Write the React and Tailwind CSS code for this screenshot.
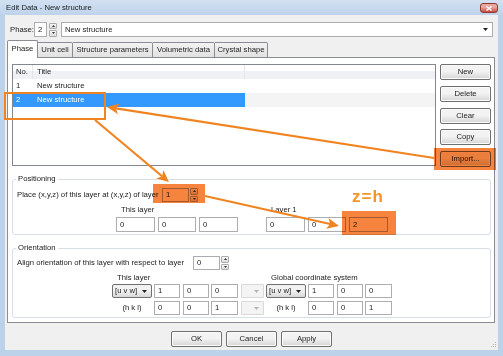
import React from 'react';

const ORANGE = '#f08420';

function Caret({ color = '#222' }) {
  return (
    <svg width="5" height="3" viewBox="0 0 5 3" className="shrink-0">
      <path d="M0 0h5L2.5 3z" fill={color} />
    </svg>
  );
}

function Input({ className = '', children }) {
  return (
    <div className={`border border-[#abadb3] bg-white pl-[3px] flex items-center leading-[10px] shrink-0 ${className}`}>
      {children}
    </div>
  );
}

function Spinner({ className = '' }) {
  return (
    <div className={`w-[8px] flex flex-col gap-[1px] shrink-0 ${className}`}>
      <div className="flex-1 border border-[#acacac] rounded-[1px] bg-linear-to-b from-[#f8f8f8] to-[#dcdcdc] flex items-center justify-center">
        <svg width="3" height="2" viewBox="0 0 3 2"><path d="M0 2h3L1.5 0z" fill="#333" /></svg>
      </div>
      <div className="flex-1 border border-[#acacac] rounded-[1px] bg-linear-to-b from-[#f8f8f8] to-[#dcdcdc] flex items-center justify-center">
        <svg width="3" height="2" viewBox="0 0 3 2"><path d="M0 0h3L1.5 2z" fill="#333" /></svg>
      </div>
    </div>
  );
}

function Combo({ className = '', disabled = false, children }) {
  if (disabled) {
    return (
      <div className={`h-[14px] border border-[#d9d9d9] bg-[#f4f4f4] rounded-[1px] flex items-center justify-end pr-[4px] shrink-0 ${className}`}>
        <Caret color="#b5b5b5" />
      </div>
    );
  }
  return (
    <div className={`h-[14px] border border-[#707070] rounded-[2px] bg-linear-to-b from-[#f2f2f2] from-45% to-[#d9d9d9] flex items-center pl-[2px] pr-[4px] shrink-0 ${className}`}>
      <span className="leading-[10px] whitespace-nowrap">{children}</span>
      <span className="ml-auto"><Caret /></span>
    </div>
  );
}

function Btn({ className = '', children }) {
  return (
    <button className={`h-[16px] flex items-center justify-center border border-[#707070] rounded-[2px] bg-linear-to-b from-[#f3f3f3] from-45% to-[#d5d5d5] shadow-[inset_0_0_0_1px_#fbfbfb] leading-[10px] ${className}`}>
      {children}
    </button>
  );
}

function Arrow({ x1, y1, x2, y2 }) {
  const dx = x2 - x1;
  const dy = y2 - y1;
  const len = Math.hypot(dx, dy);
  const ux = dx / len;
  const uy = dy / len;
  const hl = 12;
  const hw = 5.5;
  const bx = x2 - ux * hl;
  const by = y2 - uy * hl;
  const nx = x2 - ux * (hl - 3);
  const ny = y2 - uy * (hl - 3);
  const px = -uy;
  const py = ux;
  const pts = `${x2},${y2} ${bx + px * hw},${by + py * hw} ${nx},${ny} ${bx - px * hw},${by - py * hw}`;
  return (
    <g>
      <line x1={x1} y1={y1} x2={nx} y2={ny} stroke={ORANGE} strokeWidth="2.2" />
      <polygon points={pts} fill={ORANGE} />
    </g>
  );
}

const tabs = [
  { label: 'Phase', w: 'w-[31px]', active: true },
  { label: 'Unit cell', w: 'w-[35px]' },
  { label: 'Structure parameters', w: 'w-[80px]' },
  { label: 'Volumetric data', w: 'w-[62px]' },
  { label: 'Crystal shape', w: 'w-[53px]' },
];

export default function App() {
  return (
    <div className="relative w-[503px] h-[356px] overflow-hidden bg-[#bcd1ea] font-['Liberation_Sans',Arial,sans-serif] text-[7.7px] whitespace-nowrap text-[#1c1c1c]">
      {/* title bar */}
      <div className="h-[15px] flex items-center pl-[6px] pr-[5px] bg-linear-to-b from-[#d2e1f2] to-[#bed3eb]">
        <span className="leading-[10px]">Edit Data - New structure</span>
        <div className="ml-auto mt-[1px] w-[18px] h-[10px] rounded-[3px] border border-[#8e3a33] bg-linear-to-b from-[#e9a79f] from-40% to-[#c5493d] flex items-center justify-center">
          <svg width="6" height="5" viewBox="0 0 6 5">
            <path d="M0.5 0.5L5.5 4.5M5.5 0.5L0.5 4.5" stroke="#fff" strokeWidth="1.4" />
          </svg>
        </div>
      </div>

      {/* dialog body */}
      <div className="relative mx-[5px] w-[493px] h-[335px] bg-[#f0f0f0] flex flex-col">
        {/* phase row */}
        <div className="mt-[7px] h-[15px] flex items-center pl-[5px]">
          <span className="w-[24px] leading-[10px]">Phase:</span>
          <Input className="w-[13px] h-[15px]">2</Input>
          <Spinner className="ml-[2px] h-[14px]" />
          <div className="ml-[4px] w-[432px] h-[15px] border border-[#abadb3] bg-white flex items-center pl-[3px] pr-[4px]">
            <span className="leading-[10px]">New structure</span>
            <span className="ml-auto"><Caret /></span>
          </div>
        </div>

        {/* tabs */}
        <div className="relative z-10 mt-[3px] -mb-px h-[18px] flex items-end pl-[2px]">
          {tabs.map((t) =>
            t.active ? (
              <div key={t.label} className={`${t.w} h-[18px] bg-white border border-b-0 border-[#898c95] rounded-t-[2px] flex items-center justify-center leading-[10px] pb-[1px]`}>
                {t.label}
              </div>
            ) : (
              <div key={t.label} className={`${t.w} h-[16px] bg-linear-to-b from-[#f3f3f3] to-[#e1e1e1] border border-l-0 border-[#898c95] rounded-tr-[2px] flex items-center justify-center leading-[10px]`}>
                {t.label}
              </div>
            )
          )}
        </div>

        {/* tab panel */}
        <div className="ml-[2px] w-[488px] h-[266px] bg-white border border-[#898c95] flex flex-col pl-[4px] pt-[6px]">
          <div className="flex">
            {/* list */}
            <div className="w-[424px] h-[102px] border border-[#828790] bg-white flex flex-col">
              <div className="h-[14px] flex bg-linear-to-b from-white from-45% to-[#eff1f4] to-45%">
                <div className="w-[20px] pl-[3px] flex items-center border-r border-[#e3e5e8]">No.</div>
                <div className="w-[212px] pl-[4px] flex items-center border-r border-[#e3e5e8]">Title</div>
                <div className="flex-1" />
              </div>
              <div className="h-[14px] flex items-center">
                <div className="w-[20px] pl-[3px]">1</div>
                <div className="pl-[4px]">New structure</div>
              </div>
              <div className="h-[14px] flex">
                <div className="w-[232px] bg-[#3399ff] text-white flex items-center">
                  <div className="w-[20px] pl-[3px]">2</div>
                  <div className="pl-[4px]">New structure</div>
                </div>
                <div className="flex-1 bg-[#f4f4f4]" />
              </div>
            </div>
            {/* side buttons */}
            <div className="ml-[4px] w-[51px] h-[103px] flex flex-col justify-between">
              <Btn>New</Btn>
              <Btn>Delete</Btn>
              <Btn>Clear</Btn>
              <Btn>Copy</Btn>
              <Btn>Import...</Btn>
            </div>
          </div>

          {/* Positioning */}
          <fieldset className="mt-[7px] w-[479px] border border-[#d5dfe5] rounded-[3px] pb-[2px]">
            <legend className="ml-[3px] px-[2px] leading-[10px]">Positioning</legend>
            <div className="mt-[4px] h-[14px] flex items-center pl-[4px]">
              <span className="w-[145px] leading-[10px]">Place (x,y,z) of this layer at (x,y,z) of layer</span>
              <Input className="w-[27px] h-[14px]">1</Input>
              <Spinner className="ml-[1px] h-[14px]" />
            </div>
            <div className="mt-[3px] h-[10px] flex items-center pl-[108px]">
              <span className="w-[150px] leading-[10px]">This layer</span>
              <span className="leading-[10px]">Layer 1</span>
            </div>
            <div className="mt-[2px] h-[15px] flex pl-[103px]">
              <Input className="w-[39px] h-[15px]">0</Input>
              <Input className="ml-[3px] w-[38px] h-[15px]">0</Input>
              <Input className="ml-[3px] w-[39px] h-[15px]">0</Input>
              <Input className="ml-[28px] w-[39px] h-[15px]">0</Input>
              <Input className="ml-[3px] w-[38px] h-[15px]">0</Input>
              <Input className="ml-[3px] w-[39px] h-[15px]">2</Input>
            </div>
          </fieldset>

          {/* Orientation */}
          <fieldset className="mt-[8px] w-[479px] border border-[#d5dfe5] rounded-[3px] pb-[2px]">
            <legend className="ml-[3px] px-[2px] leading-[10px]">Orientation</legend>
            <div className="mt-[3px] h-[14px] flex items-center pl-[4px]">
              <span className="w-[176px] leading-[10px]">Align orientation of this layer with respect to layer</span>
              <Input className="w-[27px] h-[14px]">0</Input>
              <Spinner className="ml-[1px] h-[14px]" />
            </div>
            <div className="mt-[3px] h-[10px] flex items-center pl-[104px]">
              <span className="w-[154px] leading-[10px]">This layer</span>
              <span className="leading-[10px]">Global coordinate system</span>
            </div>
            <div className="mt-[1px] h-[14px] flex items-center pl-[99px]">
              <Combo className="w-[40px]">[u v w]</Combo>
              <Input className="ml-[2px] w-[26px] h-[14px]">1</Input>
              <Input className="ml-[3px] w-[26px] h-[14px]">0</Input>
              <Input className="ml-[2px] w-[27px] h-[14px]">0</Input>
              <Combo disabled className="ml-[3px] w-[23px]" />
              <Combo className="ml-[2px] w-[40px]">[u v w]</Combo>
              <Input className="ml-[2px] w-[26px] h-[14px]">1</Input>
              <Input className="ml-[3px] w-[26px] h-[14px]">0</Input>
              <Input className="ml-[2px] w-[27px] h-[14px]">0</Input>
            </div>
            <div className="mt-[3px] h-[14px] flex items-center pl-[99px]">
              <span className="w-[40px] text-center leading-[10px]">(h k l)</span>
              <Input className="ml-[2px] w-[26px] h-[14px]">0</Input>
              <Input className="ml-[3px] w-[26px] h-[14px]">0</Input>
              <Input className="ml-[2px] w-[27px] h-[14px]">1</Input>
              <Combo disabled className="ml-[3px] w-[23px]" />
              <span className="ml-[2px] w-[40px] text-center leading-[10px]">(h k l)</span>
              <Input className="ml-[2px] w-[26px] h-[14px]">0</Input>
              <Input className="ml-[3px] w-[26px] h-[14px]">0</Input>
              <Input className="ml-[2px] w-[27px] h-[14px]">1</Input>
            </div>
          </fieldset>
        </div>

        {/* bottom buttons */}
        <div className="mt-[8px] flex justify-center gap-[4px]">
          <Btn className="w-[51px]">OK</Btn>
          <Btn className="w-[51px]">Cancel</Btn>
          <Btn className="w-[51px]">Apply</Btn>
        </div>

        {/* resize grip */}
        <svg className="absolute right-[1px] bottom-[2px]" width="7" height="7" viewBox="0 0 7 7">
          <rect x="5" y="1" width="1" height="1" fill="#b8b8b8" />
          <rect x="3" y="3" width="1" height="1" fill="#b8b8b8" />
          <rect x="5" y="3" width="1" height="1" fill="#b8b8b8" />
          <rect x="1" y="5" width="1" height="1" fill="#b8b8b8" />
          <rect x="3" y="5" width="1" height="1" fill="#b8b8b8" />
          <rect x="5" y="5" width="1" height="1" fill="#b8b8b8" />
        </svg>
      </div>

      {/* annotation overlays */}
      <div className="absolute left-[434px] top-[148px] w-[62px] h-[22px] bg-[#f6843f] mix-blend-multiply" />
      <div className="absolute left-[153px] top-[184px] w-[52px] h-[19px] bg-[#f6843f] mix-blend-multiply" />
      <div className="absolute left-[342px] top-[211px] w-[54px] h-[24px] bg-[#f6843f] mix-blend-multiply" />
      <div className="absolute left-[4px] top-[92px] w-[102px] h-[28px] border-2 border-[#f08420]" />
      <div className="absolute left-[352px] top-[187px] text-[17px] font-bold leading-[20px] tracking-[1px] text-[#f39528]">
        z=h
      </div>
      <svg className="absolute left-0 top-0 pointer-events-none" width="503" height="356" viewBox="0 0 503 356">
        <Arrow x1={434} y1={158} x2={107} y2={107} />
        <Arrow x1={95} y1={120} x2={169} y2={182} />
        <Arrow x1={205} y1={196} x2={339} y2={226} />
      </svg>
    </div>
  );
}
